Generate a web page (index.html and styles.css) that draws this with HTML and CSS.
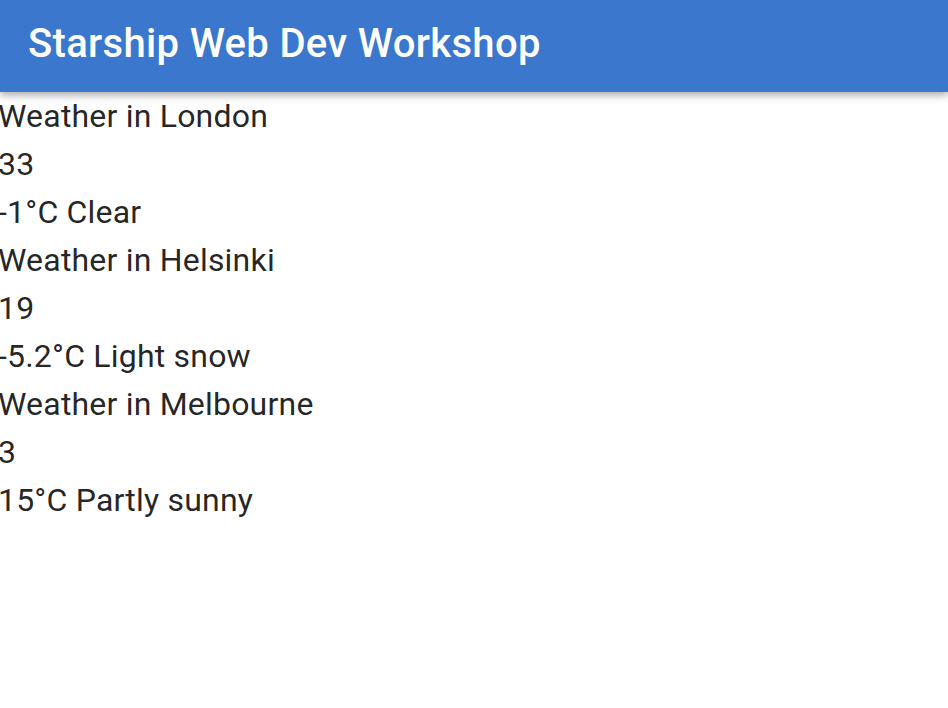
FILE: index.html
```html
<!DOCTYPE html>
<html>
<head>
<meta charset="utf-8">
<link rel="stylesheet" href="styles.css">
</head>
<body>
<header class="app-bar">
  <h1 class="app-title">Starship Web Dev Workshop</h1>
</header>
<main class="content">
  <div class="city">
    <div class="line">Weather in London</div>
    <div class="line">33</div>
    <div class="line">-1°C Clear</div>
  </div>
  <div class="city">
    <div class="line">Weather in Helsinki</div>
    <div class="line">19</div>
    <div class="line">-5.2°C Light snow</div>
  </div>
  <div class="city">
    <div class="line">Weather in Melbourne</div>
    <div class="line">3</div>
    <div class="line">15°C Partly sunny</div>
  </div>
</main>
</body>
</html>
```

FILE: styles.css
```css
html, body {
  margin: 0;
  padding: 0;
  background: #ffffff;
  font-family: Roboto, "Noto Sans", sans-serif;
}

.app-bar {
  height: 92px;
  background: #3a77cd;
  box-shadow: 0 3px 8px rgba(0, 0, 0, 0.35);
  display: flex;
  align-items: center;
  padding: 0 28px;
  position: relative;
  z-index: 1;
}

.app-title {
  margin: 0;
  color: #ffffff;
  font-size: 40px;
  font-weight: 500;
  letter-spacing: 0.33px;
  line-height: 1;
  margin-top: -4px;
}

.content {
  margin-left: -2px;
}

.line {
  font-size: 32px;
  line-height: 48px;
  letter-spacing: 0.2px;
  color: rgba(0, 0, 0, 0.87);
}
```
